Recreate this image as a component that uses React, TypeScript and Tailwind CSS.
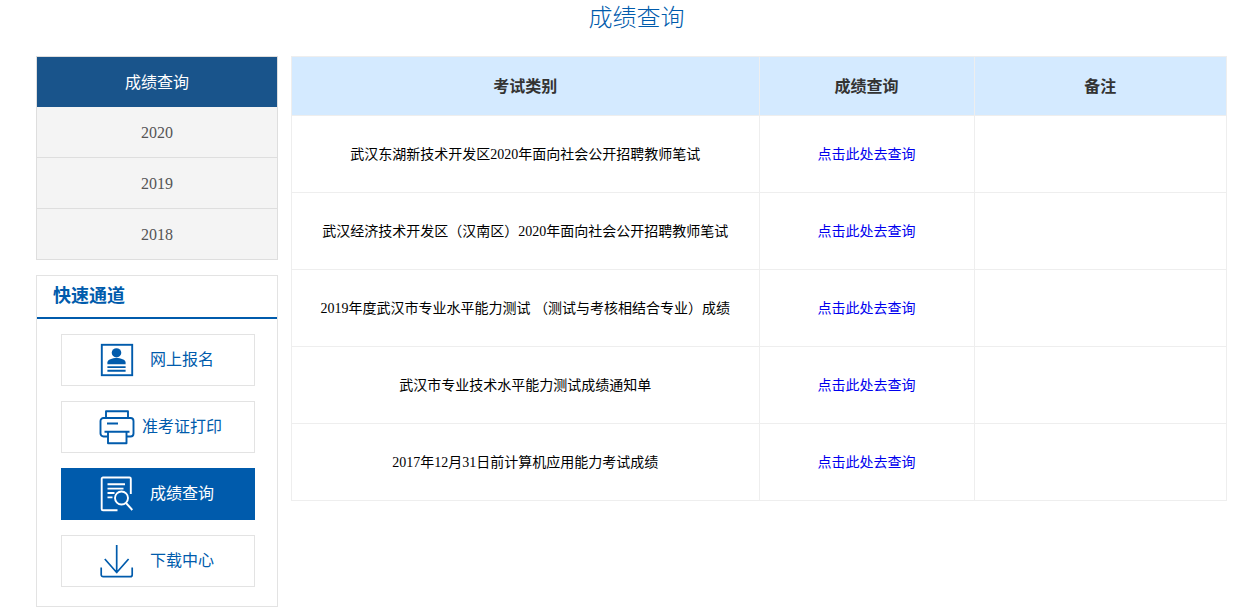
import type { ReactNode } from "react";

const years = ["2020", "2019", "2018"];

const results = [
  "武汉东湖新技术开发区2020年面向社会公开招聘教师笔试",
  "武汉经济技术开发区（汉南区）2020年面向社会公开招聘教师笔试",
  "2019年度武汉市专业水平能力测试 （测试与考核相结合专业）成绩",
  "武汉市专业技术水平能力测试成绩通知单",
  "2017年12月31日前计算机应用能力考试成绩",
];

function Icon({ children }: { children: ReactNode }) {
  return (
    <svg
      viewBox="0 0 36 36"
      className="size-9 shrink-0"
      fill="none"
      stroke="currentColor"
      strokeWidth="1.9"
      strokeLinejoin="round"
      aria-hidden="true"
    >
      {children}
    </svg>
  );
}

const channels = [
  {
    label: "网上报名",
    active: false,
    icon: (
      <Icon>
        <rect x="2.8" y="2.8" width="30.4" height="30.4" strokeLinejoin="miter" />
        <ellipse cx="17.5" cy="10.800" rx="4.800" ry="4.600" fill="currentColor" stroke="none" />
        <path d="M8.400 22.200v-1.600c0-3 5-4.600 9.100-4.600s9.100 1.600 9.100 4.600v1.600z" fill="currentColor" stroke="none" />
        <path d="M8.400 25.100h18.200M8.400 28.700h18.200" />
      </Icon>
    ),
  },
  {
    label: "准考证打印",
    active: false,
    icon: (
      <Icon>
        <path d="M7 9V2.300h22V9" />
        <path d="M8.500 27.500H4.500a3 3 0 0 1-3-3V12a3 3 0 0 1 3-3h27a3 3 0 0 1 3 3v12.500a3 3 0 0 1-3 3h-4" />
        <path d="M5.500 22.800h25M9 22.800v11.500h18.500v-11.500M8 14.500h11" />
      </Icon>
    ),
  },
  {
    label: "成绩查询",
    active: true,
    icon: (
      <Icon>
        <path d="M18.500 34.200H4a1.300 1.300 0 0 1-1.300-1.300V2.800A1.300 1.300 0 0 1 4 1.500h26.500a1.300 1.300 0 0 1 1.300 1.300V18M8.500 8.200h17.500M8.500 12.600h16M8.500 17h7M8.500 21.400h5" />
        <circle cx="22.500" cy="22" r="6.500" />
        <path d="m27 27 6.300 7" />
      </Icon>
    ),
  },
  {
    label: "下载中心",
    active: false,
    icon: (
      <Icon>
        <path
          strokeWidth="1.700"
          d="M17.700 2v27.500M5.800 16l11.900 13.500L29.600 16M2.200 24.500v7.200a2 2 0 0 0 2 2h27a2 2 0 0 0 2-2v-7.200"
        />
      </Icon>
    ),
  },
];

export default function App() {
  return (
    <main className="bg-white pr-6 pb-1 pl-9 font-['Liberation_Serif','Noto_Sans_CJK_SC',serif] text-black">
      <h1 className="pt-0.5 pl-2.5 text-center text-2xl leading-8 font-light text-[#005bac]">成绩查询</h1>

      <div className="mt-[22px] flex items-start gap-[13px]">
        <aside className="w-[242px] shrink-0">
          <nav className="border border-b-0 border-[#dedede] text-center text-base">
            <h2 className="bg-[#19548b] pt-0.5 leading-[48px] text-white">成绩查询</h2>
            <ul>
              {years.map((year) => (
                <li key={year} className="border-b border-[#dedede] bg-[#f4f4f4]">
                  <a href={`#${year}`} className="block pt-0.5 leading-[48px] text-[#555555]">
                    {year}
                  </a>
                </li>
              ))}
            </ul>
          </nav>

          <section className="mt-[15px] border border-[#e3e3e3]">
            <h2 className="border-b-2 border-[#005bac] px-4 text-lg leading-[41px] font-bold text-[#005bac]">
              快速通道
            </h2>
            <ul className="flex flex-col gap-[15px] pt-[15px] pr-[22px] pb-[19px] pl-6">
              {channels.map(({ label, active, icon }) => (
                <li key={label}>
                  <a
                    href={`#${label}`}
                    className={`flex h-[52px] items-center gap-0.5 border pl-[37px] ${
                      active
                        ? "border-[#005bac] bg-[#005bac] text-white"
                        : "border-[#e3e3e3] bg-white text-[#005bac]"
                    }`}
                  >
                    {icon}
                    <span className="w-[90px] text-center text-base">{label}</span>
                  </a>
                </li>
              ))}
            </ul>
          </section>
        </aside>

        <table className="w-full min-w-0 flex-1 table-fixed border-collapse text-center text-sm">
          <thead>
            <tr className="h-[59px] bg-[#d4eaff] text-base text-[#333333]">
              <th className="w-[50%] border border-[#eeeeee] pt-0.5 font-bold">考试类别</th>
              <th className="w-[23%] border border-[#eeeeee] pt-0.5 font-bold">成绩查询</th>
              <th className="w-[27%] border border-[#eeeeee] pt-0.5 font-bold">备注</th>
            </tr>
          </thead>
          <tbody>
            {results.map((name) => (
              <tr key={name} className="h-[77px]">
                <td className="border border-[#eeeeee] pt-0.5">{name}</td>
                <td className="border border-[#eeeeee] pt-0.5">
                  <a href="#query" className="text-[#0000ee]">
                    点击此处去查询
                  </a>
                </td>
                <td className="border border-[#eeeeee] pt-0.5" />
              </tr>
            ))}
          </tbody>
        </table>
      </div>
    </main>
  );
}
